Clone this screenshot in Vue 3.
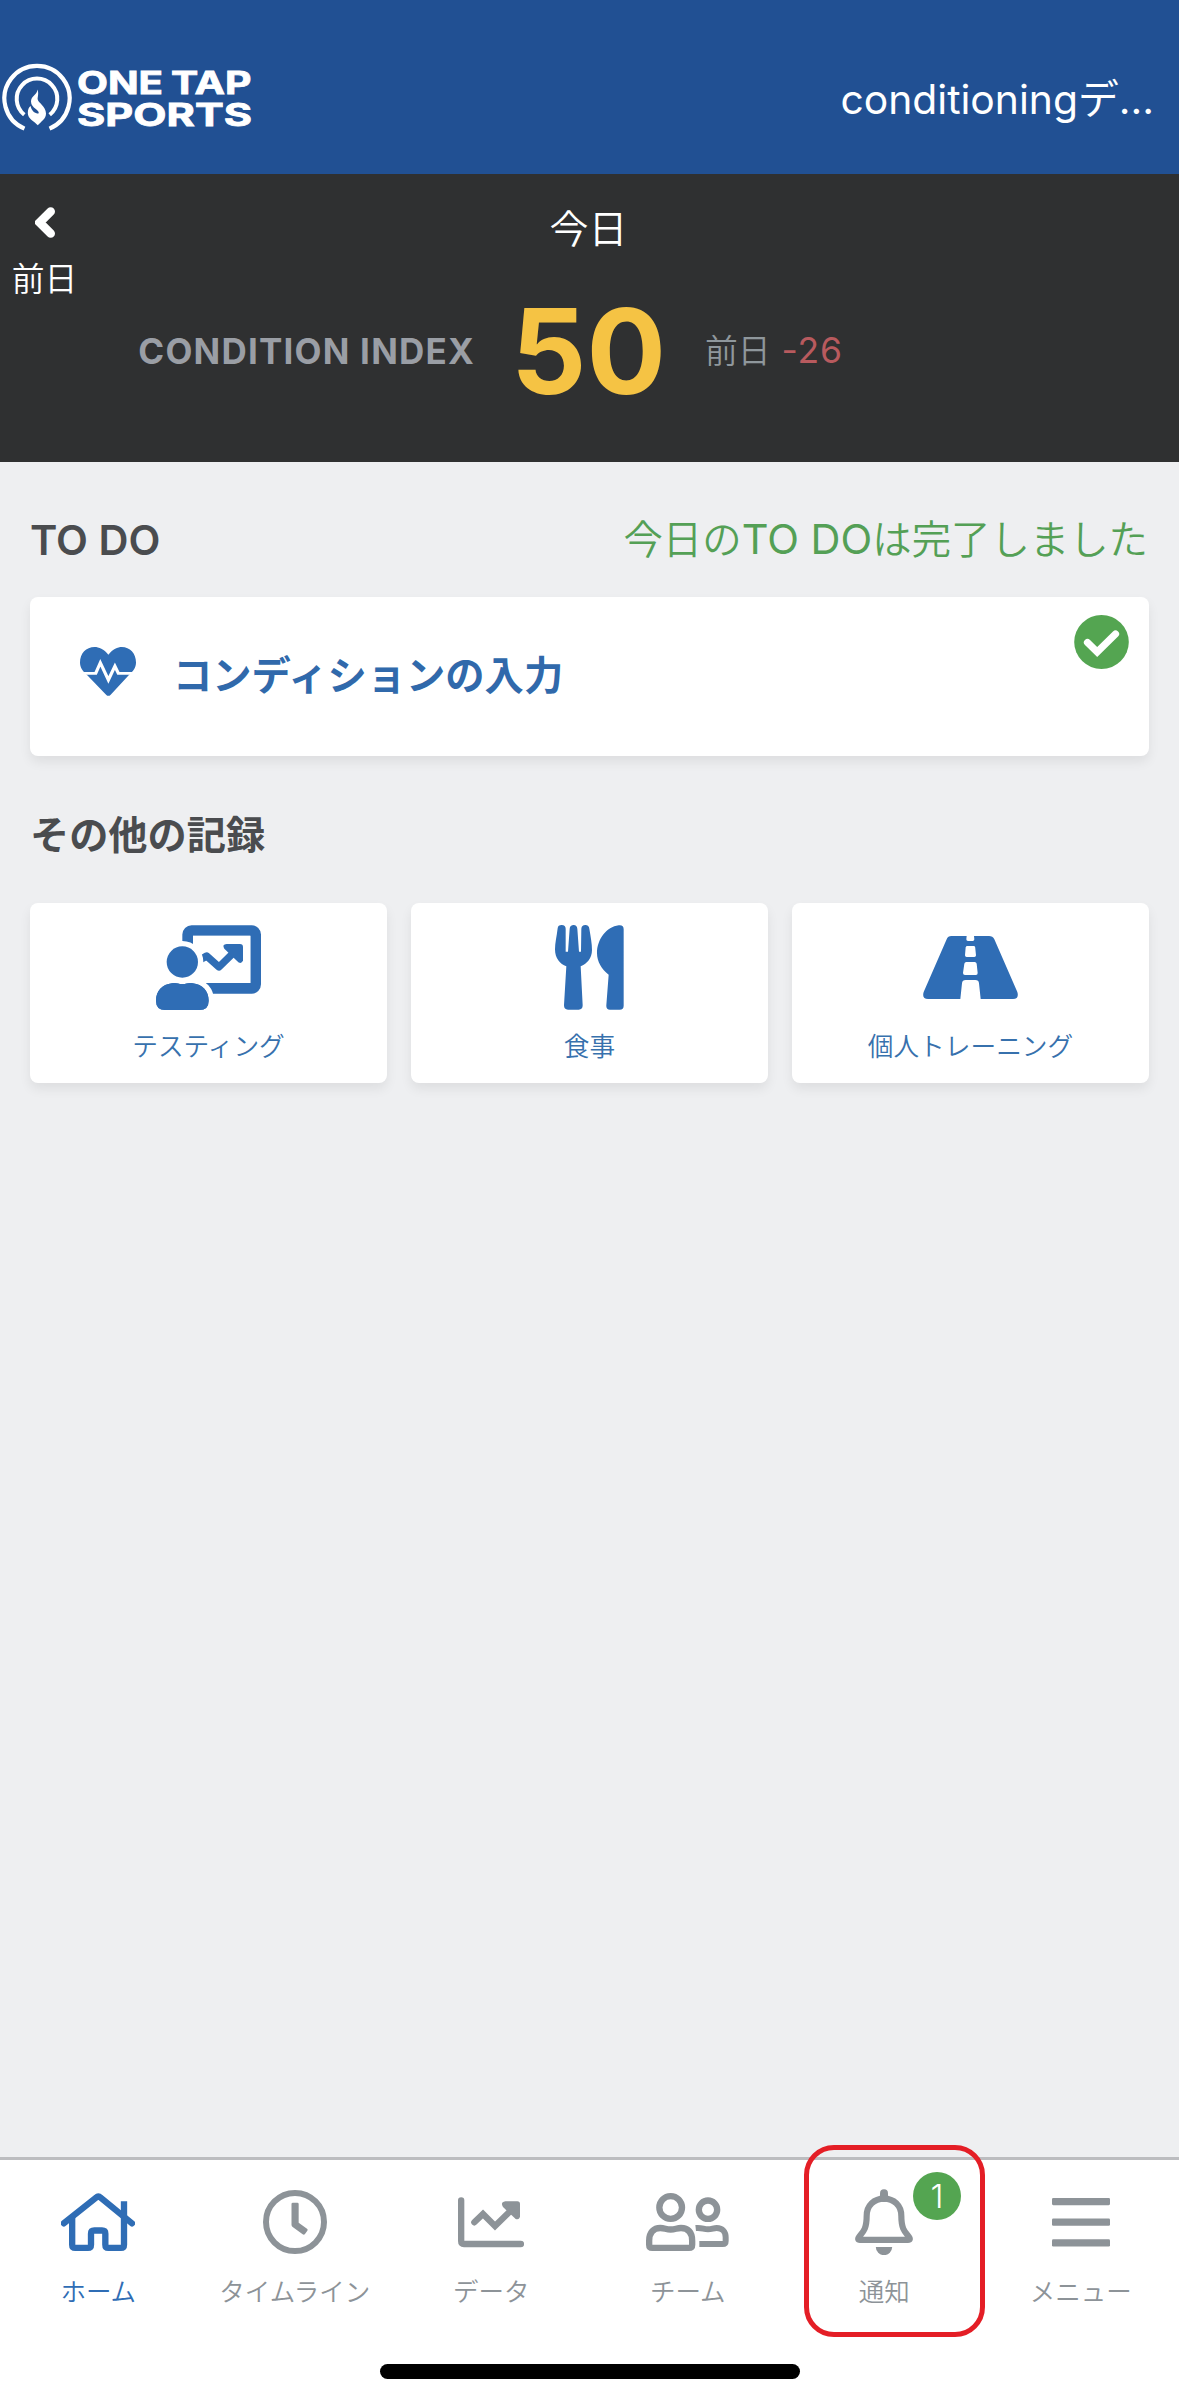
<script setup>
const tabs = [
  { id: 'home', label: 'ホーム', active: true },
  { id: 'timeline', label: 'タイムライン' },
  { id: 'data', label: 'データ' },
  { id: 'team', label: 'チーム' },
  { id: 'notice', label: '通知', badge: 1 },
  { id: 'menu', label: 'メニュー' }
]
</script>

<template>
  <div class="app">
    <header class="topbar">
      <svg class="logo" width="256" height="76" viewBox="0 62 256 76">
        <g fill="none" stroke="#fff">
          <path d="M24.5 129.6 A32.6 32.6 0 1 1 49.5 129.6" stroke-width="4.2" />
          <path d="M24.3 115.7 A20.3 20.3 0 1 1 49.7 115.7" stroke-width="4" />
        </g>
        <path fill="#fff" d="M37.6 90.5 C38.8 95 37.8 97 37.6 100 C38 104 46 107 46 114.5 C46 120 41 122.5 37.8 126.3 C34.5 122.5 27.8 120 27.8 114 C27.8 110.5 29 108 30.6 107 C31.5 112 35 114.5 38.5 114.5 C40.5 111 31 109.5 31 102.5 C31 97 37 96 37.6 90.5Z" />
        <g class="wordmark" fill="#fff">
          <text x="77" y="95" textLength="86" lengthAdjust="spacingAndGlyphs">ONE</text>
          <text x="171" y="95" textLength="80.5" lengthAdjust="spacingAndGlyphs">TAP</text>
          <text x="77" y="126.5" textLength="175" lengthAdjust="spacingAndGlyphs">SPORTS</text>
        </g>
      </svg>
      <div class="account">conditioningデ…</div>
    </header>

    <section class="hero">
      <div class="prev">
        <svg width="20" height="31" viewBox="105 110 60 92">
          <path d="M152 123 L119 156 L152 189" fill="none" stroke="#fff" stroke-width="26" stroke-linecap="round" />
        </svg>
        <span>前日</span>
      </div>
      <div class="summary">
        <div class="today">今日</div>
        <div class="index">
          <div class="index-label">CONDITION INDEX</div>
          <div class="score">50</div>
          <div class="diff"><span>前日</span><span class="minus">-26</span></div>
        </div>
      </div>
    </section>

    <main class="content">
      <div class="todo-head">
        <h2 class="todo-title">TO DO</h2>
        <div class="done">今日の<span class="lat">TO DO</span>は完了しました</div>
      </div>
      <div class="card todo">
        <svg class="heart" width="56" height="49" viewBox="209 472 146 146" preserveAspectRatio="none">
          <path fill="#2f6db5" d="M283 495 C271 478 258 472 247 472 C225 472 209 491 209 518 C209 533 216 544 228 556 L277 614 Q283 621 289 614 L336 556 C348 544 355 533 355 518 C355 491 339 472 318 472 C307 472 295 478 283 495Z" />
          <path fill="none" stroke="#fff" stroke-width="8.5" d="M205 550.5 H250 L262 519 L283 570 L300 529 L309 550.5 H360" />
        </svg>
        <span class="todo-text">コンディションの入力</span>
        <svg class="check" width="55" height="54" viewBox="0 0 55 54">
          <ellipse cx="27.5" cy="27" rx="27.3" ry="27" fill="#54a551" />
          <path d="M13.5 27.5 L23.2 37 L41.5 19" fill="none" stroke="#fff" stroke-width="7.2" stroke-linecap="round" />
        </svg>
      </div>

      <h2 class="other-title">その他の記録</h2>
      <div class="tiles">
        <div class="card tile">
          <svg width="105" height="85" viewBox="468 405 315 255">
            <rect x="563" y="421.5" width="204" height="173.5" rx="12" fill="none" stroke="#2f6db5" stroke-width="32" />
            <rect x="579" y="437.5" width="172" height="141.5" fill="#fff" />
            <path d="M596 512 L620 498 L657 531 L704 485" fill="none" stroke="#2f6db5" stroke-width="22" stroke-linejoin="round" />
            <path d="M680 462 H720 Q729 462 729 471 V511 Q726 523 715 517 L673 476 Q665 463 680 462Z" fill="#2f6db5" />
            <g fill="#2f6db5" stroke="#fff" stroke-width="32" paint-order="stroke">
              <path d="M516 580 C528 576 533 582 547 582 C561 582 566 576 578 580 C608 583 626 604 626 632 Q626 660 598 660 H496 Q468 660 468 632 C468 604 486 583 516 580Z" />
              <circle cx="547" cy="516" r="47" />
            </g>
            <path fill="#2f6db5" d="M516 580 C528 576 533 582 547 582 C561 582 566 576 578 580 C608 583 626 604 626 632 Q626 660 598 660 H496 Q468 660 468 632 C468 604 486 583 516 580Z" />
          </svg>
          <span>テスティング</span>
        </div>
        <div class="card tile">
          <svg width="69" height="85" viewBox="495 135 207 255">
            <g fill="#2f6db5">
              <path d="M503 145 Q504 135 515 135 Q527 136 527 146 L527 215 H534 L539 146 Q540 135 551 135 Q561 136 562 146 L567 215 H573 L574 146 Q575 135 586 135 Q597 136 598 146 C602 170 606 190 606 210 C606 235 590 252 572 259 L578 376 Q578 389 566 389 H534 Q522 389 522 376 L529 259 C510 252 495 235 495 208 C495 190 500 170 503 145Z" />
              <path d="M686 136 Q701 134 701 148 V377 Q701 389 689 389 H660 Q648 389 649 376 L656 284 C635 268 621 245 621 220 C621 178 650 140 686 136Z" />
            </g>
          </svg>
          <span>食事</span>
        </div>
        <div class="card tile">
          <svg width="95" height="85" viewBox="429 135 285 255">
            <path fill="#2f6db5" fill-rule="evenodd" d="M514 168 H560 L559 178 Q559 183 564 183 H578 Q583 183 583 178 L582 168 H627 Q638 168 643 178 L712 336 Q718 357 699 357 H602 L597 310 Q596 300 586 300 H557 Q547 300 546 310 L541 357 H444 Q425 357 431 336 L500 178 Q504 168 514 168Z M562 198 H581 Q585 198 585.5 202 L588 226 Q588 231 583 231 H560 Q555 231 555 226 L557 202 Q558 198 562 198Z M559 246 H584 Q589 246 590 251 L593 279 Q593 285 588 285 H555 Q549 285 549 279 L553 251 Q554 246 559 246Z" />
          </svg>
          <span>個人トレーニング</span>
        </div>
      </div>
    </main>

    <nav class="tabbar">
      <div class="tabs">
        <div v-for="t in tabs" :key="t.id" class="tab" :class="{ active: t.active }">
          <svg v-if="t.id === 'home'" width="74" height="66" viewBox="183 147 222 198" fill="none" stroke="currentColor" stroke-width="19">
            <path d="M191.5 250 L288 173 Q295 166 302 173 L396 250" stroke-linecap="round" />
            <path d="M216.5 232 V314 Q216.5 323.5 226 323.5 H264 Q273 323.5 273 314 V281 Q273 271.5 283 271.5 H306 Q316 271.5 316 281 V314 Q316 323.5 325 323.5 H363 Q372 323.5 372 314 V184" />
          </svg>
          <svg v-else-if="t.id === 'timeline'" width="64" height="66" viewBox="786 147 192 198" fill="none" stroke="currentColor">
            <circle cx="882" cy="246" r="87" stroke-width="18" />
            <path d="M871.5 192 Q871.5 188 875.5 188 H889 Q893 188 893 192 V248 L918 266 Q922 269 919 272 L912 282 Q909 286 905 283 L875 261 Q871.5 258 871.5 254Z" fill="currentColor" stroke="none" />
          </svg>
          <svg v-else-if="t.id === 'data'" width="66" height="66" viewBox="204 147 198 198" fill="none" stroke="currentColor" stroke-width="19">
            <path d="M213.5 181 V303 Q213.5 312 222 312 H393" stroke-linecap="round" />
            <path d="M253 247 L279 222 L315 258 L365 209" stroke-linecap="round" stroke-linejoin="miter" />
            <path d="M346 184 H382 Q390 184 390 192 V229 Q388 241 377 237 L339 201 Q330 187 346 184Z" fill="currentColor" stroke="none" />
          </svg>
          <svg v-else-if="t.id === 'team'" width="83" height="66" viewBox="768 147 249 198" fill="none" stroke="currentColor" stroke-width="19">
            <circle cx="842" cy="202.5" r="34" />
            <circle cx="954" cy="209" r="27.5" />
            <path d="M787 323.5 H897 Q906.5 323.5 906.5 314 V302 C906.5 275 893 264 873 264 C860 264 856 268.5 842 268.5 C828 268.5 824 264 811 264 C791 264 777.5 277 777.5 302 V314 Q777.5 323.5 787 323.5Z" />
            <path d="M917 264 C936 262 940 268 954 268 C966 268 970 264 980 264 C998 264 1007 276 1007 292 V303 Q1007 312 998 312 H928" stroke-width="18" />
          </svg>
          <svg v-else-if="t.id === 'notice'" width="58" height="66" viewBox="225 177 174 198" fill="none" stroke="currentColor">
            <path d="M312 190 V204" stroke-width="24" stroke-linecap="round" />
            <path d="M312 206 C283 206 260 226 260 258 C260 296 250 305 237 321 Q231 329.5 240 329.5 H384 Q393 329.5 387 321 C374 305 364 296 364 258 C364 226 341 206 312 206Z" stroke-width="18.5" stroke-linejoin="round" />
            <path d="M287.5 351 H336.5 A24.5 24.5 0 0 1 287.5 351Z" fill="currentColor" stroke="none" />
          </svg>
          <svg v-else width="58" height="66" viewBox="813 177 174 198" fill="currentColor">
            <rect x="813" y="204" width="174" height="21.5" rx="4" />
            <rect x="813" y="265.5" width="174" height="22" rx="4" />
            <rect x="813" y="327.5" width="174" height="22" rx="4" />
          </svg>
          <span class="tab-label">{{ t.label }}</span>
          <span v-if="t.badge" class="badge">{{ t.badge }}</span>
          <span v-if="t.badge" class="highlight"></span>
        </div>
      </div>
      <div class="home-indicator"></div>
    </nav>
  </div>
</template>

<style>
body {
  margin: 0;
  background: #eeeff1;
}
</style>

<style scoped>
.app {
  width: 1179px;
  height: 2403px;
  display: flex;
  flex-direction: column;
  background: #eeeff1;
  font-family: Inter, 'Noto Sans CJK JP', sans-serif;
  overflow: hidden;
}
.topbar {
  height: 174px;
  flex: none;
  box-sizing: border-box;
  padding: 24px 25px 0 0;
  display: flex;
  align-items: center;
  justify-content: space-between;
  background: #215093;
}
.wordmark {
  font: 700 31px Inter, sans-serif;
  stroke: #fff;
  stroke-width: 0.8px;
}
.account {
  color: #fff;
  font-size: 40.8px;
  line-height: 50px;
  white-space: nowrap;
}
.hero {
  height: 288px;
  flex: none;
  display: grid;
  grid-template-columns: 87px 1fr 87px;
  background: #2f3031;
  color: #fff;
}
.prev {
  display: flex;
  flex-direction: column;
  align-items: center;
  padding-top: 33px;
  font-size: 32.8px;
  font-weight: 350;
}
.prev svg {
  margin-left: 3px;
}
.prev span {
  line-height: 40px;
  margin: 21px 0 0 2px;
}
.summary {
  display: flex;
  flex-direction: column;
  align-items: center;
  padding-top: 27px;
}
.today {
  margin-left: -2px;
  font-size: 39px;
  line-height: 56px;
  font-weight: 350;
}
.index {
  width: 100%;
  display: grid;
  grid-template-columns: 1fr auto 1fr;
  align-items: center;
  margin-top: 24px;
}
.index-label {
  text-align: right;
  padding-right: 37px;
  font-size: 35px;
  font-weight: 700;
  letter-spacing: 1.2px;
  color: #9a9ea5;
  white-space: nowrap;
}
.score {
  margin: 0 1px 0 -1px;
  font-size: 118px;
  line-height: 140px;
  font-weight: 700;
  color: #f5c344;
}
.diff {
  display: flex;
  gap: 11px;
  align-items: baseline;
  padding-left: 38px;
  margin-top: -6px;
  font-size: 32.8px;
  font-weight: 350;
  color: #8f979c;
}
.minus {
  font-size: 35.5px;
  font-weight: 400;
  letter-spacing: 0.8px;
  color: #b85a5e;
}
.content {
  flex: 1;
  padding: 48px 30px 0;
}
.todo-head {
  display: flex;
  justify-content: space-between;
  height: 60px;
  align-items: center;
}
h2 {
  margin: 0;
  color: #4a4c4f;
  white-space: nowrap;
}
.todo-title {
  font-size: 41.5px;
  font-weight: 600;
}
.done {
  margin: -7px 1px 0 0;
  font-size: 39.4px;
  font-weight: 350;
  color: #54a056;
  white-space: nowrap;
}
.lat {
  font-size: 41.5px;
  font-weight: 400;
}
.card {
  background: #fff;
  border-radius: 8px;
  box-shadow: 0 6px 12px rgba(0, 0, 0, 0.07);
}
.todo {
  height: 159px;
  margin-top: 27px;
  box-sizing: border-box;
  padding: 0 20px 0 50px;
  display: flex;
  align-items: center;
}
.heart {
  margin-bottom: 10px;
}
.todo-text {
  margin: 0 auto 8px 37px;
  font-size: 39.3px;
  font-weight: 700;
  color: #3069ab;
}
.check {
  align-self: flex-start;
  margin-top: 18px;
}
.other-title {
  margin-top: 49px;
  font-size: 39.2px;
  line-height: 60px;
  font-weight: 700;
}
.tiles {
  display: grid;
  grid-template-columns: repeat(3, 1fr);
  gap: 24px;
  margin-top: 38px;
}
.tile {
  height: 180px;
  box-sizing: border-box;
  padding-top: 22px;
  display: flex;
  flex-direction: column;
  align-items: center;
  font-size: 25.7px;
  line-height: 36px;
  font-weight: 350;
  color: #3771ad;
}
.tile span {
  margin-top: 19px;
}
.tabbar {
  height: 246px;
  flex: none;
  box-sizing: border-box;
  border-top: 3px solid #bcbdc0;
  background: #fff;
}
.tabs {
  display: grid;
  grid-template-columns: repeat(6, 1fr);
  height: 204px;
}
.tab {
  position: relative;
  display: flex;
  flex-direction: column;
  align-items: center;
  padding-top: 29px;
  color: #8d9398;
}
.tab.active {
  color: #2f6db5;
}
.tab-label {
  margin-top: 19px;
  font-size: 25.5px;
  line-height: 36px;
  font-weight: 350;
  white-space: nowrap;
}
.badge {
  position: absolute;
  left: 127px;
  top: 12px;
  width: 48px;
  height: 48px;
  border-radius: 50%;
  background: #54a551;
  color: #fff;
  font-size: 33px;
  font-weight: 350;
  line-height: 48px;
  text-align: center;
}
.highlight {
  position: absolute;
  left: 18px;
  top: -15px;
  width: 171px;
  height: 182px;
  border: 5px solid #e41e26;
  border-radius: 30px;
}
.home-indicator {
  width: 420px;
  height: 15px;
  margin: 0 auto;
  border-radius: 8px;
  background: #000;
}
</style>
